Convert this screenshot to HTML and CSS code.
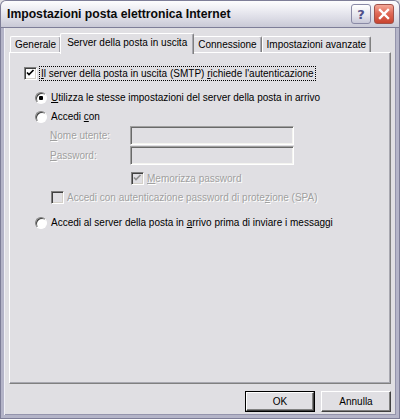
FILE: index.html
```html
<!DOCTYPE html>
<html lang="it">
<head>
  <meta charset="UTF-8">
  <title>Impostazioni posta elettronica Internet</title>
  <link rel="stylesheet" href="styles.css">
</head>
<body>
  <div class="window">
    <div class="titlebar">
      <span class="title">Impostazioni posta elettronica Internet</span>
      <div class="title-buttons">
        <span class="tbtn help">?</span>
        <span class="tbtn close">
          <svg width="12" height="12" viewBox="0 0 12 12">
            <path d="M2 2 L10 10 M10 2 L2 10" stroke="#fff" stroke-width="2.4" stroke-linecap="square"/>
          </svg>
        </span>
      </div>
    </div>

    <div class="body">
      <div class="tabs">
        <div class="tab">Generale</div>
        <div class="tab active">Server della posta in uscita</div>
        <div class="tab">Connessione</div>
        <div class="tab">Impostazioni avanzate</div>
      </div>

      <div class="panel">
        <label class="row auth">
          <span class="check checked"></span>
          <span class="focus"><u>I</u>l server della posta in uscita (SMTP) <u>r</u>ichiede l'autenticazione</span>
        </label>

        <label class="row radio-row first">
          <span class="radio selected"></span>
          <span><u>U</u>tilizza le stesse impostazioni del server della posta in arrivo</span>
        </label>
        <label class="row radio-row">
          <span class="radio"></span>
          <span>Accedi <u>c</u>on</span>
        </label>

        <div class="field">
          <span class="field-label disabled"><u>N</u>ome utente:</span>
          <span class="textbox"></span>
        </div>
        <div class="field">
          <span class="field-label disabled"><u>P</u>assword:</span>
          <span class="textbox"></span>
        </div>

        <label class="row remember">
          <span class="check checked disabled-box"></span>
          <span class="disabled"><u>M</u>emorizza password</span>
        </label>
        <label class="row spa">
          <span class="check disabled-box"></span>
          <span class="disabled">Accedi con autenticazione password di prote<u>z</u>ione (SPA)</span>
        </label>

        <label class="row radio-row last">
          <span class="radio"></span>
          <span>Accedi al server della posta in <u>a</u>rrivo prima di inviare i messaggi</span>
        </label>
      </div>

      <div class="buttons">
        <button class="btn default">OK</button>
        <button class="btn">Annulla</button>
      </div>
    </div>
  </div>
</body>
</html>
```

FILE: styles.css
```css
body {
  margin: 0;
  background: #e0dfe3;
  font-family: "Liberation Sans", Arial, sans-serif;
  font-size: 10px;
  color: #000;
}

.window {
  width: 400px;
  height: 419px;
  display: flex;
  flex-direction: column;
  background: #e0dfe3;
}

/* title bar */

.titlebar {
  height: 27px;
  box-sizing: border-box;
  display: flex;
  align-items: center;
  justify-content: space-between;
  padding: 0 5px 0 6px;
  border: 1px solid #7e7e98;
  border-bottom: 0;
  border-radius: 6px 6px 0 0;
  background: linear-gradient(#fdfdfe, #ececf2 35%, #dadae4 70%, #c9c9d6);
}

.title {
  font-size: 12.2px;
  font-weight: bold;
  color: #0a0a0a;
}

.title-buttons {
  display: flex;
  gap: 3px;
}

.tbtn {
  width: 20px;
  height: 20px;
  box-sizing: border-box;
  display: flex;
  align-items: center;
  justify-content: center;
  border-radius: 3px;
}

.help {
  border: 1px solid #8a8aa6;
  background: linear-gradient(#ffffff, #e4e4ec 60%, #c8c8d8);
  color: #50508a;
  font-family: "DejaVu Sans", sans-serif;
  font-weight: bold;
  font-size: 13px;
}

.close {
  border: 1px solid #a0524a;
  background: linear-gradient(#f4a898, #e06a58 45%, #c8432f);
}

/* window body */

.body {
  flex: 1;
  display: flex;
  flex-direction: column;
  padding: 6px 5px 3px;
  border: 4px solid #b4b4c8;
  border-top: 0;
  box-shadow: inset 1px 0 #f0f0f6, inset -1px 0 #9494ac, inset 0 -1px #9494ac;
  outline: 1px solid #7e7e98;
  outline-offset: -1px;
}

/* tabs */

.tabs {
  display: flex;
  align-items: flex-end;
  height: 19px;
  padding-left: 1px;
}

.tab {
  height: 16px;
  box-sizing: border-box;
  padding: 2px 4px 0;
  border: 1px solid #fff;
  border-bottom: 0;
  border-right-color: #808080;
  border-radius: 2px 2px 0 0;
  box-shadow: inset -1px 0 #a8a8b0;
  white-space: nowrap;
}

.tab.active {
  position: relative;
  height: 21px;
  margin: 0 -1px -2px -1px;
  padding: 3px 6px 0;
  background: #e0dfe3;
}

/* panel */

.panel {
  flex: 1;
  display: flex;
  flex-direction: column;
  padding: 13px 0 0 14px;
  border: 1px solid #fff;
  border-right-color: #808080;
  border-bottom-color: #808080;
  box-shadow: inset -1px -1px #a8a8b0;
}

.row {
  display: flex;
  align-items: center;
  gap: 3px;
  height: 15px;
}

.radio-row {
  padding-left: 11px;
  gap: 4px;
  margin-top: 4px;
}

.radio-row.first {
  margin-top: 9px;
}

.radio-row.last {
  margin-top: 10px;
}

.focus {
  padding: 0 1px;
  outline: 1px dotted #000;
  outline-offset: 0;
  line-height: 13px;
}

.check {
  width: 13px;
  height: 13px;
  box-sizing: border-box;
  flex: none;
  border: 1px solid;
  border-color: #808080 #fff #fff #808080;
  box-shadow: inset 1px 1px #404040, inset -1px -1px #d4d0c8;
  background: #fff;
}

.check.checked {
  background: #fff url("data:image/svg+xml;utf8,<svg xmlns='http://www.w3.org/2000/svg' width='11' height='11'><path d='M2 4.5 L4 6.5 L8.5 2' fill='none' stroke='black' stroke-width='1.7'/></svg>") center no-repeat;
}

.check.disabled-box {
  background-color: #e0dfe3;
}

.check.checked.disabled-box {
  background-image: url("data:image/svg+xml;utf8,<svg xmlns='http://www.w3.org/2000/svg' width='11' height='11'><path d='M2 4.5 L4 6.5 L8.5 2' fill='none' stroke='%23909090' stroke-width='1.7'/></svg>");
}

.radio {
  width: 12px;
  height: 12px;
  box-sizing: border-box;
  flex: none;
  border-radius: 50%;
  border: 1px solid;
  border-color: #808080 #fff #fff #808080;
  box-shadow: inset 1px 1px #404040;
  background: #fff;
}

.radio.selected {
  background: radial-gradient(circle, #000 0 2px, #fff 2.5px);
}

/* disabled fields */

.disabled {
  color: #a0a0a0;
  text-shadow: 1px 1px #fff;
}

.field {
  display: flex;
  align-items: center;
  padding-left: 26px;
  margin-top: 1px;
}

.field:first-of-type {
  margin-top: 2px;
}

.field-label {
  width: 80px;
}

.textbox {
  width: 164px;
  height: 19px;
  box-sizing: border-box;
  border: 1px solid;
  border-color: #a0a0a0 #fff #fff #a0a0a0;
  box-shadow: inset 1px 1px #696969, inset -1px -1px #f4f4f0;
  background: #e0dfe3;
}

.remember {
  padding-left: 107px;
  margin-top: 6px;
}

.spa {
  padding-left: 27px;
  margin-top: 4px;
}

/* dialog buttons */

.buttons {
  display: flex;
  justify-content: flex-end;
  gap: 6px;
  margin-top: 7px;
}

.btn {
  width: 70px;
  height: 21px;
  padding: 0;
  font: inherit;
  color: #000;
  background: #e0dfe3;
  border: 1px solid;
  border-color: #fff #404040 #404040 #fff;
  box-shadow: inset -1px -1px #808080;
}

.btn.default {
  outline: 1px solid #000;
  outline-offset: -1px;
  border-width: 2px;
  box-shadow: inset -1px -1px #808080;
}
```
